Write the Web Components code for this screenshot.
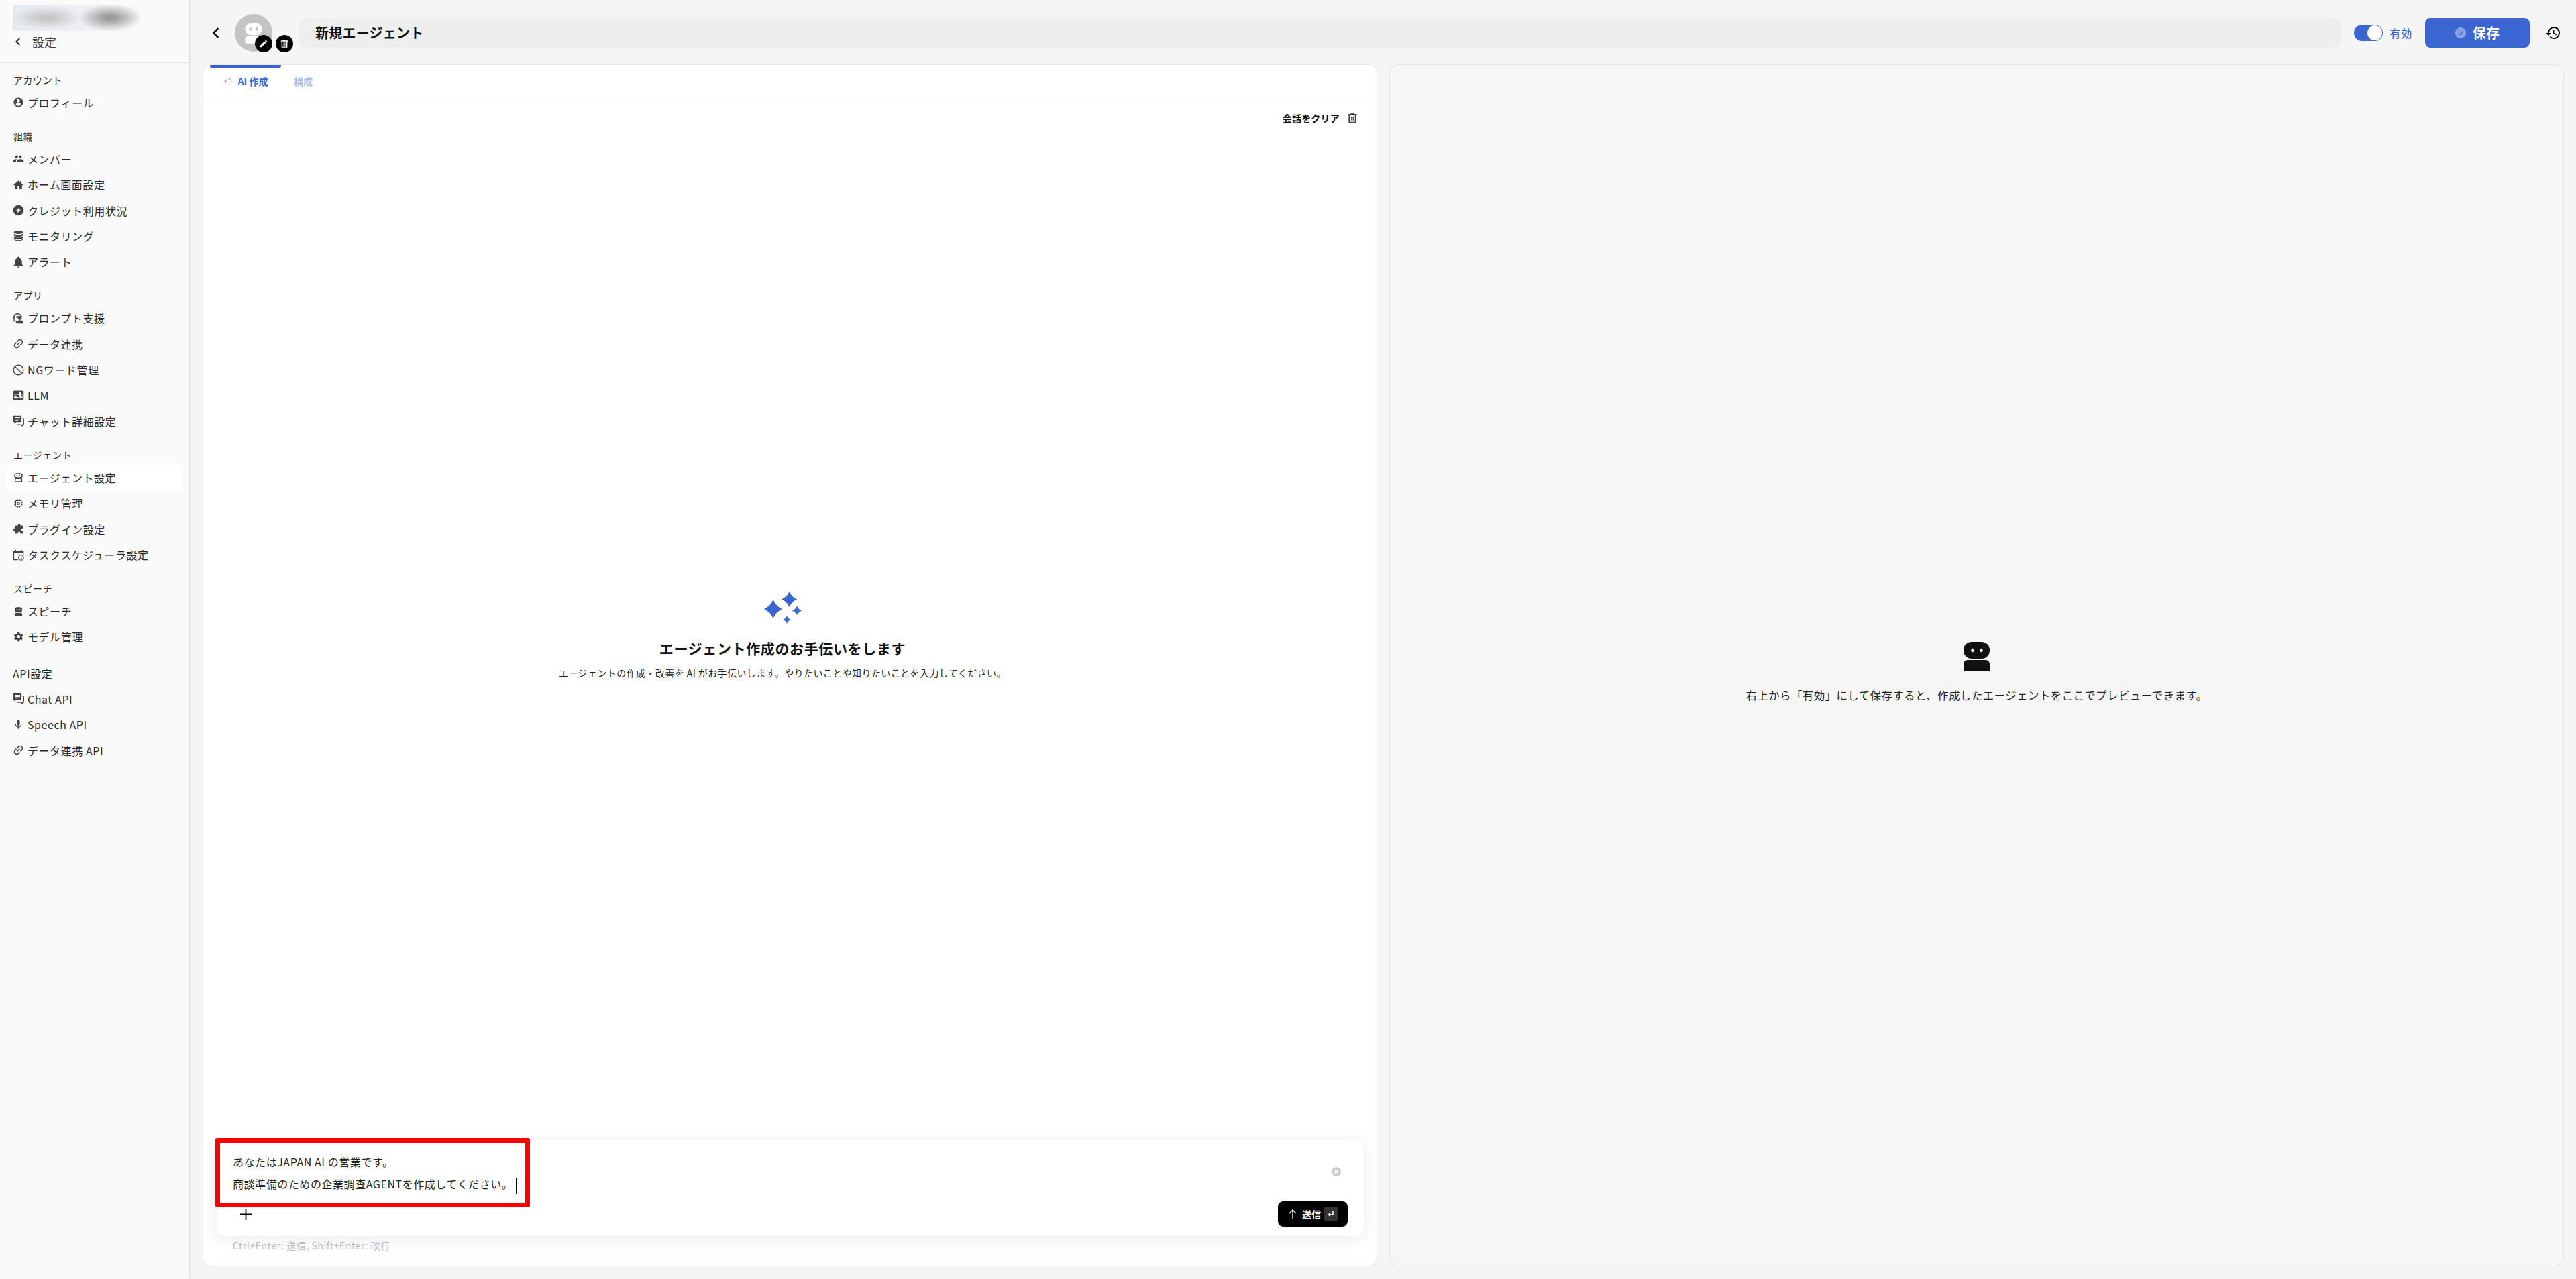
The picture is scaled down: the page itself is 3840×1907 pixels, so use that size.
<!DOCTYPE html>
<html lang="ja">
<head>
<meta charset="utf-8">
<title>新規エージェント</title>
<style>
  html, body { margin: 0; height: 100%; }
  body {
    display: flex;
    height: 1907px;
    overflow: hidden;
    background: #f5f5f5;
    color: #222;
    font-family: "Noto Sans CJK JP", "Noto Sans", sans-serif;
    letter-spacing: .035em;
  }
</style>
</head>
<body>
  <app-sidebar></app-sidebar>
  <agent-editor></agent-editor>

<script>
// Icon set, 24x24 unless the entry is listed in ICON_BOXES
const ICON_BOXES = { sparkles: '0 0 56 48' };
const ICONS = {
  chevron: '<path d="M15.5 4.5 8 12l7.5 7.5" fill="none" stroke="currentColor" stroke-width="2.8"/>',
  account: '<path d="M12 2C6.48 2 2 6.48 2 12s4.48 10 10 10 10-4.48 10-10S17.52 2 12 2zm0 3c1.66 0 3 1.34 3 3v1.5c0 1.66-1.34 3-3 3s-3-1.34-3-3V8c0-1.66 1.34-3 3-3zm0 14.6c-2.5 0-4.71-1.28-6-3.22.03-1.99 4-3.08 6-3.08 1.99 0 5.97 1.09 6 3.08-1.29 1.94-3.5 3.22-6 3.22z"/>',
  people: '<path transform="matrix(-1 0 0 1 24 0)" d="M16 11c1.66 0 2.99-1.34 2.99-3S17.66 5 16 5c-1.66 0-3 1.34-3 3s1.34 3 3 3zm-8 0c1.66 0 2.99-1.34 2.99-3S9.66 5 8 5C6.34 5 5 6.34 5 8s1.34 3 3 3zm0 2c-2.33 0-7 1.17-7 3.5V19h14v-2.5c0-2.33-4.67-3.5-7-3.5zm8 0c-.29 0-.62.02-.97.05 1.16.84 1.97 1.97 1.97 3.45V19h6v-2.5c0-2.33-4.67-3.5-7-3.5z"/>',
  home: '<path d="M10 21v-6h4v6h5.5v-8H23L18.5 9V4H16v2.8L12 3 1 13h3.5v8z"/>',
  bolt: '<path fill-rule="evenodd" d="M12 1a11 11 0 1 0 0 22 11 11 0 0 0 0-22zm2.2 4.5-1 5.2H17L9.8 18.5l1-5.5H7z"/>',
  database: '<ellipse cx="12" cy="5" rx="9.5" ry="3.6"/><path d="M2.5 7.6v3.2c0 2 4.3 3.6 9.5 3.6s9.5-1.6 9.5-3.6V7.6c-1.6 1.7-5.3 2.7-9.5 2.7s-7.900-1-9.500-2.700zM2.500 13.300v3.100c0 2 4.300 3.600 9.500 3.600s9.500-1.600 9.500-3.600v-3.100c-1.600 1.700-5.300 2.700-9.500 2.700s-7.900-1-9.500-2.700z"/><path d="M2.500 18.800v.6c0 2 4.300 3.600 9.500 3.600s9.500-1.600 9.500-3.600v-.6c-1.600 1.700-5.300 2.700-9.500 2.700s-7.900-1-9.500-2.700z"/>',
  bell: '<path d="M12 24c1.300 0 2.300-1 2.300-2.200H9.700c0 1.200 1 2.200 2.300 2.200zm7.500-7v-5.500c0-3.500-2-6.600-5.300-7.500v-1a2.200 2.200 0 0 0-4.400 0v1C6.500 4.900 4.500 8 4.500 11.500V17L2 19.500v1h20v-1z"/>',
  prompt: '<path fill-rule="evenodd" d="M10.500 1.500C5.500 1.500 1.800 5.300 1.600 9.500L0 13c-.2.500.1 1 .6 1H2v3c0 1.100.9 2 2 2h3v3h2v-5H4v-5.500l-.2-.2C3.700 6.800 6.700 3.500 10.500 3.500c3.700 0 6.500 2.600 7 5.500h2c-.5-4-4-7.500-9-7.500z"/><circle cx="15" cy="11" r="4"/><path d="M9 23v-3c0-2.500 3.500-4 6-4s7 1.500 7 4v3z"/><path d="M8 7h5v1.200H8zM8 10h3v1.200H8z"/>',
  link: '<path transform="rotate(-45 12 12)" d="M3.300 12c0-2.050 1.650-3.700 3.700-3.700h4V6H7c-3.310 0-6 2.690-6 6s2.690 6 6 6h4v-2.300H7c-2.050 0-3.700-1.650-3.700-3.700zM8 13.100h8v-2.200H8zM17 6h-4v2.300h4c2.050 0 3.700 1.650 3.700 3.700s-1.650 3.700-3.700 3.700h-4V18h4c3.310 0 6-2.690 6-6s-2.690-6-6-6z"/>',
  block: '<circle cx="12" cy="12" r="10.300" fill="none" stroke="currentColor" stroke-width="2"/><path d="M5 5l14 14" stroke="currentColor" stroke-width="2"/>',
  llm: '<path fill-rule="evenodd" d="M4 2h16a3 3 0 0 1 3 3v14a3 3 0 0 1-3 3H4a3 3 0 0 1-3-3V5a3 3 0 0 1 3-3zm10 3v4H3v1.500h11V15H8v-1.500H3V15h3v1H3v1.500h3V19h2v-1.500h8V19h2v-1.500h3V16h-3v-1h3v-1.500h-3V10.500h3V9h-3V5zM8 16h8v-1H8z"/>',
  chat: '<path d="M2.500 1H17a1.500 1.500 0 0 1 1.500 1.500V13a1.500 1.500 0 0 1-1.500 1.500H7.500L3.500 18v-3.500h-1A1.500 1.500 0 0 1 1 13V2.500A1.500 1.500 0 0 1 2.500 1z"/><path d="M4.500 5h11M4.500 8h11M4.500 11h7" stroke="#fafafa" stroke-width="1.600"/><path d="M20.500 7H22a1 1 0 0 1 1 1v11a1 1 0 0 1-1 1h-1v3l-3.500-3H10" fill="none" stroke="currentColor" stroke-width="1.800"/>',
  agent: '<rect x="4" y="4" width="16" height="8.500" rx="4" fill="none" stroke="currentColor" stroke-width="2"/><circle cx="9" cy="8.200" r="1.100"/><circle cx="15" cy="8.200" r="1.100"/><path d="M5 21v-4.500a2 2 0 0 1 2-2h10a2 2 0 0 1 2 2V21z" fill="none" stroke="currentColor" stroke-width="2"/>',
  memory: '<path d="M15 9H9v6h6V9zm-2 4h-2v-2h2v2zm8-2V9h-2V7c0-1.100-.9-2-2-2h-2V3h-2v2h-2V3H9v2H7c-1.100 0-2 .9-2 2v2H3v2h2v2H3v2h2v2c0 1.100.9 2 2 2h2v2h2v-2h2v2h2v-2h2c1.100 0 2-.9 2-2v-2h2v-2h-2v-2h2zm-4 6H7V7h10v10z"/>',
  plugin: '<path transform="matrix(-1 0 0 1 24 0)" d="M20.500 11H19V7c0-1.100-.9-2-2-2h-4V3.500C13 2.120 11.880 1 10.500 1S8 2.120 8 3.500V5H4c-1.100 0-1.990.9-1.990 2v3.800H3.500c1.490 0 2.700 1.210 2.700 2.700s-1.210 2.700-2.700 2.700H2V20c0 1.100.9 2 2 2h3.800v-1.500c0-1.490 1.210-2.700 2.700-2.700 1.490 0 2.700 1.210 2.700 2.700V22H17c1.100 0 2-.9 2-2v-4h1.500c1.380 0 2.500-1.120 2.500-2.500S21.880 11 20.500 11z"/>',
  schedule: '<path d="M11 21H3V8h18v3h2V4.500a1.500 1.500 0 0 0-1.500-1.500H19V1h-2v2H7V1H5v2H2.500A1.500 1.500 0 0 0 1 4.500v17A1.500 1.500 0 0 0 2.500 23H11z"/><circle cx="17.500" cy="17.500" r="5.300" fill="none" stroke="currentColor" stroke-width="1.600"/><path d="M17.500 14.500v3.200l2.200 1.200" fill="none" stroke="currentColor" stroke-width="1.400"/>',
  robot: '<path fill-rule="evenodd" d="M9.500 3h5A5.500 5.500 0 0 1 20 8.500 5.500 5.500 0 0 1 14.500 14h-5A5.500 5.500 0 0 1 4 8.500 5.500 5.500 0 0 1 9.500 3zM9 7a1.200 1.500 0 1 0 .01 0zm6 0a1.200 1.500 0 1 0 .01 0z"/><path d="M7 15h10a3 3 0 0 1 3 3v4H4v-4a3 3 0 0 1 3-3z"/>',
  gear: '<path d="M19.140 12.940c.04-.3.06-.61.06-.94 0-.32-.02-.64-.07-.94l2.030-1.580c.18-.14.23-.41.12-.61l-1.920-3.320c-.12-.22-.37-.29-.59-.22l-2.390.96c-.5-.38-1.030-.7-1.620-.94l-.36-2.540c-.04-.24-.24-.41-.48-.41h-3.840c-.24 0-.43.17-.47.41l-.36 2.540c-.59.24-1.130.57-1.620.94l-2.390-.96c-.22-.08-.47 0-.59.22L2.740 8.870c-.12.21-.08.47.12.61l2.030 1.580c-.05.3-.09.63-.09.94s.02.64.07.94l-2.030 1.580c-.18.14-.23.41-.12.61l1.920 3.320c.12.22.37.29.59.22l2.390-.96c.5.38 1.030.7 1.620.94l.36 2.540c.05.24.24.41.48.41h3.840c.24 0 .44-.17.47-.41l.36-2.540c.59-.24 1.130-.56 1.620-.94l2.390.96c.22.08.47 0 .59-.22l1.920-3.320c.12-.22.07-.47-.12-.61l-2.010-1.580zM12 15.600c-1.980 0-3.600-1.620-3.600-3.600s1.620-3.600 3.600-3.600 3.600 1.620 3.600 3.600-1.620 3.600-3.600 3.600z"/>',
  mic: '<path d="M12 14c1.660 0 3-1.340 3-3V5c0-1.660-1.340-3-3-3S9 3.340 9 5v6c0 1.660 1.340 3 3 3zm5.910-3c-.49 0-.9.36-.98.85C16.520 14.200 14.470 16 12 16s-4.520-1.800-4.930-4.150c-.08-.49-.49-.85-.98-.85-.61 0-1.090.54-1 1.140.49 3 2.890 5.350 5.910 5.780V20c0 .55.45 1 1 1s1-.45 1-1v-2.080c3.020-.43 5.420-2.780 5.910-5.780.1-.6-.39-1.140-1-1.140z"/>',
  history: '<path d="M13 3a9 9 0 0 0-9 9H1l3.890 3.890.07.14L9 12H6c0-3.870 3.130-7 7-7s7 3.130 7 7-3.130 7-7 7c-1.930 0-3.680-.79-4.940-2.060l-1.420 1.420A8.954 8.954 0 0 0 13 21a9 9 0 0 0 0-18zm-1 5v5l4.280 2.540.72-1.210-3.500-2.080V8H12z"/>',
  edit: '<path d="M3 17.250V21h3.750L17.810 9.940l-3.750-3.750L3 17.250zM20.710 7.040c.39-.39.39-1.020 0-1.410l-2.340-2.340a.996.996 0 0 0-1.410 0l-1.830 1.830 3.750 3.750 1.830-1.830z"/>',
  trash: '<path fill-rule="evenodd" d="M8.500 2h7v2H21v2.500h-1.500V22h-15V6.500H3V4h5.500zM7 6.500V19.500h10V6.500zM9.500 9h1.800v8H9.500zm3.200 0h1.800v8h-1.800z"/>',
  sparkles: '<path d="M13.500 12Q18 22 27 26 18 30 13.500 40 9 30 0 26 9 22 13.500 12z"/><path d="M37.500 0Q41 8 49 11.500 41 15 37.500 23 34 15 26 11.500 34 8 37.500 0z"/><path d="M49 21.500Q51 26.500 56 28.500 51 30.500 49 35 47 30.500 42 28.500 47 26.500 49 21.500z"/><path d="M34 36Q35.500 40.500 40 42 35.500 43.500 34 48 32.500 43.500 28 42 32.500 40.500 34 36z"/>'
};

// Small helper element so that the icons stay in one place
class UiIcon extends HTMLElement {
  connectedCallback() {
    const name = this.getAttribute('name');
    const box = ICON_BOXES[name] || '0 0 24 24';
    this.attachShadow({ mode: 'open' }).innerHTML = `
      <style>
        :host { display: inline-flex; flex: none; width: var(--size, 16px); height: var(--size-h, var(--size, 16px)); }
        svg { width: 100%; height: 100%; fill: currentColor; display: block; }
      </style>
      <svg viewBox="${box}" preserveAspectRatio="xMidYMid meet">${ICONS[name]}</svg>`;
  }
}
customElements.define('ui-icon', UiIcon);

class NavItem extends HTMLElement {
  connectedCallback() {
    this.attachShadow({ mode: 'open' }).innerHTML = `
      <style>
        :host {
          display: flex;
          align-items: center;
          gap: 5px;
          height: 38.4px;
          padding-left: 9px;
          border-radius: 6px;
          font-size: 16px;
          color: #2a2a2a;
        }
        :host([active]) { background: #fff; }
        ui-icon { --size: 17px; color: #444; }
      </style>
      <ui-icon name="${this.getAttribute('icon')}"></ui-icon>
      <slot></slot>`;
  }
}
customElements.define('nav-item', NavItem);

class NavSection extends HTMLElement {
  connectedCallback() {
    this.attachShadow({ mode: 'open' }).innerHTML = `
      <style>
        :host { display: block; margin-bottom: 16px; }
        .label {
          display: flex;
          align-items: center;
          height: 29.6px;
          padding-left: 10px;
          font-size: 14px;
          color: #2a2a2a;
        }
        :host([big]) .label { height: 38px; font-size: 16px; padding-left: 9px; }
      </style>
      <div class="label">${this.getAttribute('label')}</div>
      <slot></slot>`;
  }
}
customElements.define('nav-section', NavSection);

class AppSidebar extends HTMLElement {
  constructor() {
    super();
    this.sections = [
      { label: 'アカウント', items: [['account', 'プロフィール']] },
      { label: '組織', items: [['people', 'メンバー'], ['home', 'ホーム画面設定'], ['bolt', 'クレジット利用状況'], ['database', 'モニタリング'], ['bell', 'アラート']] },
      { label: 'アプリ', items: [['prompt', 'プロンプト支援'], ['link', 'データ連携'], ['block', 'NGワード管理'], ['llm', 'LLM'], ['chat', 'チャット詳細設定']] },
      { label: 'エージェント', items: [['agent', 'エージェント設定', true], ['memory', 'メモリ管理'], ['plugin', 'プラグイン設定'], ['schedule', 'タスクスケジューラ設定']] },
      { label: 'スピーチ', items: [['robot', 'スピーチ'], ['gear', 'モデル管理']] },
      { label: 'API設定', big: true, items: [['chat', 'Chat API'], ['mic', 'Speech API'], ['link', 'データ連携 API']] }
    ];
  }

  connectedCallback() {
    this.attachShadow({ mode: 'open' }).innerHTML = `
      <style>
        :host {
          display: block;
          flex: none;
          width: 282px;
          height: 100%;
          background: #fafafa;
          box-shadow: 1px 0 3px rgba(0, 0, 0, .12);
          position: relative;
        }
        .top { height: 94px; padding: 7px 0 0 19px; box-sizing: border-box; border-bottom: 1px solid #e2e2e2; }
        .logo {
          width: 191px;
          height: 39px;
          background:
            radial-gradient(ellipse 48px 20px at 76% 50%, #9c9c9c 15%, transparent),
            radial-gradient(ellipse 52px 17px at 27% 50%, #c6c6c6 15%, transparent),
            linear-gradient(90deg, #e6eaf1, #f0f1f4 70%, #fafafa);
        }
        .back { display: flex; align-items: center; gap: 13px; height: 32px; font-size: 18px; color: #444; letter-spacing: 0; }
        .back ui-icon { --size: 16px; color: #222; }
        nav { padding: 10px 9px 0 10px; }
      </style>
      <div class="top">
        <div class="logo"></div>
        <div class="back"><ui-icon name="chevron"></ui-icon>設定</div>
      </div>
      <nav>
        ${this.sections.map(s => `
          <nav-section label="${s.label}" ${s.big ? 'big' : ''}>
            ${s.items.map(i => `<nav-item icon="${i[0]}" ${i[2] ? 'active' : ''}>${i[1]}</nav-item>`).join('')}
          </nav-section>`).join('')}
      </nav>`;
  }
}
customElements.define('app-sidebar', AppSidebar);

class AgentHeader extends HTMLElement {
  connectedCallback() {
    this.attachShadow({ mode: 'open' }).innerHTML = `
      <style>
        :host { display: flex; align-items: center; height: 97px; padding: 0 3px 0 8px; box-sizing: border-box; flex: none; letter-spacing: .015em; }
        .back { --size: 22px; color: #000; margin-right: 17px; }
        .avatar {
          position: relative;
          flex: none;
          width: 56px;
          height: 56px;
          margin-right: 40px;
          border-radius: 50%;
          background: #c4c4c4;
          color: #fff;
          display: flex;
          align-items: center;
          justify-content: center;
        }
        .avatar > ui-icon { --size: 38px; }
        .badge {
          position: absolute;
          top: 31px;
          width: 26px;
          height: 26px;
          border-radius: 50%;
          background: #000;
          color: #fff;
          display: flex;
          align-items: center;
          justify-content: center;
          --size: 14px;
        }
        .title {
          flex: 1;
          height: 44px;
          display: flex;
          align-items: center;
          padding-left: 24px;
          border-radius: 10px;
          background: #eeeeee;
          font-size: 20px;
          font-weight: 700;
          color: #111;
          margin-right: 19px;
        }
        .toggle {
          position: relative;
          flex: none;
          width: 43px;
          height: 24px;
          border-radius: 12px;
          background: #3b66d1;
          margin-right: 10px;
        }
        .toggle::after {
          content: "";
          position: absolute;
          right: 1px;
          top: 1px;
          width: 22px;
          height: 22px;
          border-radius: 50%;
          background: #fff;
        }
        .state { font-size: 16px; font-weight: 500; color: #3b66d1; margin-right: 19px; line-height: 24px; letter-spacing: .05em; }
        .save {
          flex: none;
          width: 156px;
          height: 44px;
          display: flex;
          align-items: center;
          justify-content: center;
          gap: 10px;
          border-radius: 8px;
          background: #3b66d1;
          color: #fff;
          font-size: 20px;
          font-weight: 700;
          margin-right: 23px;
        }
        .save svg { width: 16px; height: 16px; }
        .history { --size: 24px; color: #000; }
      </style>
      <ui-icon class="back" name="chevron"></ui-icon>
      <div class="avatar">
        <ui-icon name="robot"></ui-icon>
        <span class="badge" style="left:30px"><ui-icon name="edit"></ui-icon></span>
        <span class="badge" style="left:61px"><ui-icon name="trash"></ui-icon></span>
      </div>
      <div class="title">新規エージェント</div>
      <div class="toggle"></div>
      <span class="state">有効</span>
      <div class="save">
        <svg viewBox="0 0 16 16"><circle cx="8" cy="8" r="8" fill="#8ba4e4"/><path d="M5 8.200l2.200 2.200L11.200 6" fill="none" stroke="#3b66d1" stroke-width="1.500"/></svg>
        保存
      </div>
      <ui-icon class="history" name="history"></ui-icon>`;
  }
}
customElements.define('agent-header', AgentHeader);

class ChatComposer extends HTMLElement {
  connectedCallback() {
    this.attachShadow({ mode: 'open' }).innerHTML = `
      <style>
        :host {
          display: flex;
          flex-direction: column;
          flex: none;
          position: relative;
          height: 143px;
          margin: 0 19px 0 20px;
          padding: 16px 24px 14px;
          box-sizing: border-box;
          border-radius: 14px;
          background: #fff;
          box-shadow: 0 4px 24px rgba(0, 0, 0, .09);
        }
        .text { flex: 1; font-size: 16px; line-height: 33px; color: #222; }
        .caret { display: inline-block; width: 1px; height: 24px; background: #000; vertical-align: middle; margin-left: 5px; }
        .foot { display: flex; align-items: center; justify-content: space-between; }
        .plus { width: 38px; height: 38px; display: flex; align-items: center; justify-content: center; }
        .send {
          display: flex;
          align-items: center;
          height: 38px;
          width: 104px;
          box-sizing: border-box;
          padding-left: 16px;
          border-radius: 8px;
          background: #000;
          color: #fff;
          font-size: 14px;
          font-weight: 700;
          letter-spacing: 0;
        }
        .send .chip {
          width: 20px;
          height: 22px;
          margin-left: 5px;
          border-radius: 4px;
          background: #333;
          display: flex;
          align-items: center;
          justify-content: center;
        }
        .send svg { display: block; }
        .clear { position: absolute; left: 1662px; top: 40px; }
        /* red annotation drawn over the field in the source picture */
        .mark {
          position: absolute;
          left: -2px;
          top: -3px;
          width: 469px;
          height: 103px;
          box-sizing: border-box;
          border: 7px solid #ff0000;
          border-radius: 3px;
        }
      </style>
      <div class="text">
        <div>あなたはJAPAN AI の営業です。</div>
        <div>商談準備のための企業調査AGENTを作成してください。<span class="caret"></span></div>
      </div>
      <svg class="clear" width="14" height="14" viewBox="0 0 14 14"><circle cx="7" cy="7" r="7" fill="#cccccc"/><path d="M4.500 4.500l5 5M9.500 4.500l-5 5" stroke="#fff" stroke-width="1.600"/></svg>
      <div class="foot">
        <div class="plus"><svg width="17" height="17" viewBox="0 0 17 17"><path d="M8.500 0v17M0 8.500h17" stroke="#000" stroke-width="1.800"/></svg></div>
        <div class="send">
          <svg width="12" height="14" viewBox="0 0 12 14" style="margin-right:8px"><path d="M6 14V1M1 6l5-5 5 5" fill="none" stroke="#fff" stroke-width="1.300"/></svg>
          送信
          <span class="chip"><svg width="10" height="10" viewBox="0 0 10 10"><path d="M8 0v6H2M4 3.500 1.500 6 4 8.500" fill="none" stroke="#fff" stroke-width="1.500"/></svg></span>
        </div>
      </div>
      <div class="mark"></div>`;
  }
}
customElements.define('chat-composer', ChatComposer);

class ChatPanel extends HTMLElement {
  connectedCallback() {
    this.attachShadow({ mode: 'open' }).innerHTML = `
      <style>
        :host {
          display: flex;
          flex-direction: column;
          flex: 1;
          min-width: 0;
          border-radius: 12px;
          background: #fff;
          box-shadow: 0 0 0 1px #e9e9e9;
          overflow: hidden;
        }
        .tabs {
          display: flex;
          flex: none;
          height: 48px;
          padding-left: 10px;
          box-sizing: border-box;
          border-bottom: 1px solid #e6e6e6;
          font-size: 14px;
          font-weight: 700;
          letter-spacing: 0;
        }
        .tab { display: flex; align-items: center; justify-content: center; gap: 8px; position: relative; color: #aabdec; }
        .tab.on { width: 106px; color: #3b66d1; margin-right: 19px; }
        .tab.on::before {
          content: "";
          position: absolute;
          left: 0;
          right: 0;
          top: 0;
          height: 5px;
          border-radius: 0 0 4px 4px;
          background: #3b66d1;
        }
        .tab.on ui-icon { --size: 14px; color: #c9c9c9; }
        .tools {
          flex: none;
          height: 62px;
          display: flex;
          align-items: center;
          justify-content: flex-end;
          gap: 10px;
          padding-right: 27px;
          box-sizing: border-box;
          font-size: 14px;
          font-weight: 700;
          letter-spacing: .015em;
          color: #111;
        }
        .tools ui-icon { --size: 18px; color: #444; }
        .empty {
          flex: 1;
          display: flex;
          flex-direction: column;
          align-items: center;
          justify-content: center;
          min-height: 0;
          padding: 0 22px 11px 0;
        }
        .empty ui-icon { --size: 56px; --size-h: 48px; color: #3b66d1; margin-bottom: 18px; }
        h3 { margin: 0; font-size: 21px; line-height: 36px; font-weight: 700; color: #111; letter-spacing: .03em; }
        p { margin: 7px 0 0; font-size: 14px; line-height: 24px; color: #222; letter-spacing: .03em; }
        .hint { flex: none; height: 28px; margin: 0 0 16px 44px; font-size: 14px; line-height: 28px; color: #bdbdbd; }
      </style>
      <div class="tabs">
        <div class="tab on"><ui-icon name="sparkles"></ui-icon>AI 作成</div>
        <div class="tab">構成</div>
      </div>
      <div class="tools">会話をクリア<ui-icon name="trash"></ui-icon></div>
      <div class="empty">
        <ui-icon name="sparkles"></ui-icon>
        <h3>エージェント作成のお手伝いをします</h3>
        <p>エージェントの作成・改善を AI がお手伝いします。やりたいことや知りたいことを入力してください。</p>
      </div>
      <chat-composer></chat-composer>
      <div class="hint">Ctrl+Enter: 送信, Shift+Enter: 改行</div>`;
  }
}
customElements.define('chat-panel', ChatPanel);

class PreviewPanel extends HTMLElement {
  connectedCallback() {
    this.attachShadow({ mode: 'open' }).innerHTML = `
      <style>
        :host {
          display: flex;
          flex-direction: column;
          flex: 1;
          min-width: 0;
          align-items: center;
          justify-content: center;
          gap: 23px;
          padding-top: 21px;
          box-sizing: border-box;
          border-radius: 12px;
          background: #f6f6f6;
          box-shadow: 0 0 0 1px #e6e6e6;
          font-size: 16.4px;
          letter-spacing: .03em;
          line-height: 24px;
          color: #222;
        }
        svg { display: block; width: 39px; height: 44px; }
      </style>
      <svg viewBox="0 0 39 44">
        <rect width="39" height="25" rx="12" fill="#111"/>
        <ellipse cx="13.500" cy="12.500" rx="2.200" ry="2.800" fill="#f6f6f6"/>
        <ellipse cx="26.500" cy="12.500" rx="2.200" ry="2.800" fill="#f6f6f6"/>
        <path d="M6 27h27a6 6 0 0 1 6 6v11H0V33a6 6 0 0 1 6-6z" fill="#111"/>
      </svg>
      <div>右上から「有効」にして保存すると、作成したエージェントをここでプレビューできます。</div>`;
  }
}
customElements.define('preview-panel', PreviewPanel);

class AgentEditor extends HTMLElement {
  connectedCallback() {
    this.attachShadow({ mode: 'open' }).innerHTML = `
      <style>
        :host {
          display: flex;
          flex-direction: column;
          flex: 1;
          min-width: 0;
          height: 100%;
          padding: 0 19px 20px 21px;
          box-sizing: border-box;
        }
        .panels { display: flex; flex: 1; gap: 20px; min-height: 0; }
      </style>
      <agent-header></agent-header>
      <div class="panels">
        <chat-panel></chat-panel>
        <preview-panel></preview-panel>
      </div>`;
  }
}
customElements.define('agent-editor', AgentEditor);
</script>
</body>
</html>
